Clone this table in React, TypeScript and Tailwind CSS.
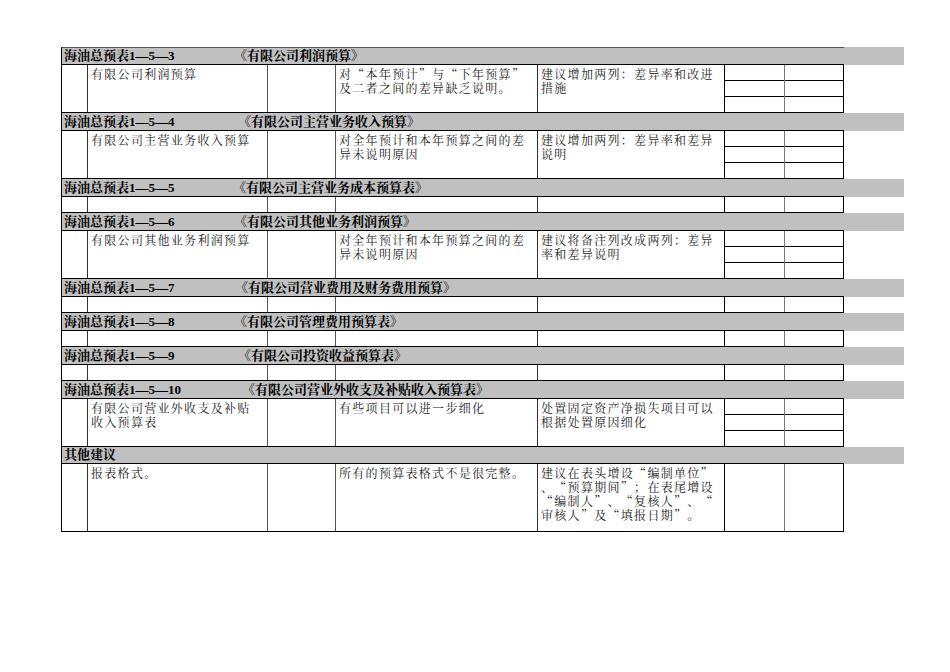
import React from "react";

type Row =
  | { kind: "head"; code: string; title?: string; tx: number; h?: number; first?: boolean }
  | { kind: "data"; c2: string[]; c4: string[]; c5: string[]; tall?: boolean }
  | { kind: "empty" };

const rows: Row[] = [
  { kind: "head", code: "海油总预表1—5—3", title: "《有限公司利润预算》", tx: 172, first: true },
  {
    kind: "data",
    c2: ["有限公司利润预算"],
    c4: ["对“本年预计”与“下年预算”", "及二者之间的差异缺乏说明。"],
    c5: ["建议增加两列：差异率和改进", "措施"],
  },
  { kind: "head", code: "海油总预表1—5—4", title: "《有限公司主营业务收入预算》", tx: 176 },
  {
    kind: "data",
    c2: ["有限公司主营业务收入预算"],
    c4: ["对全年预计和本年预算之间的差", "异未说明原因"],
    c5: ["建议增加两列：差异率和差异", "说明"],
  },
  { kind: "head", code: "海油总预表1—5—5", title: "《有限公司主营业务成本预算表》", tx: 171 },
  { kind: "empty" },
  { kind: "head", code: "海油总预表1—5—6", title: "《有限公司其他业务利润预算》", tx: 172 },
  {
    kind: "data",
    c2: ["有限公司其他业务利润预算"],
    c4: ["对全年预计和本年预算之间的差", "异未说明原因"],
    c5: ["建议将备注列改成两列：差异", "率和差异说明"],
  },
  { kind: "head", code: "海油总预表1—5—7", title: "《有限公司营业费用及财务费用预算》", tx: 173 },
  { kind: "empty" },
  { kind: "head", code: "海油总预表1—5—8", title: "《有限公司管理费用预算表》", tx: 172 },
  { kind: "empty" },
  { kind: "head", code: "海油总预表1—5—9", title: "《有限公司投资收益预算表》", tx: 176 },
  { kind: "empty" },
  { kind: "head", code: "海油总预表1—5—10", title: "《有限公司营业外收支及补贴收入预算表》", tx: 180 },
  {
    kind: "data",
    c2: ["有限公司营业外收支及补贴", "收入预算表"],
    c4: ["有些项目可以进一步细化"],
    c5: ["处置固定资产净损失项目可以", "根据处置原因细化"],
  },
  { kind: "head", code: "其他建议", tx: 0, h: 17 },
  {
    kind: "data",
    tall: true,
    c2: ["报表格式。"],
    c4: ["所有的预算表格式不是很完整。"],
    c5: ["建议在表头增设“编制单位”", "、“预算期间”；在表尾增设", "“编制人”、“复核人”、“", "审核人”及“填报日期”。"],
  },
];

const cjk = { fontFamily: '"Noto Serif CJK SC", "Noto Sans CJK SC", "Liberation Serif", serif' };
const head = { fontFamily: '"Liberation Serif", "Noto Serif CJK SC", "Noto Sans CJK SC", serif' };

function Lines({ lines }: { lines: string[] }) {
  return (
    <div
      className="pl-[3px] pt-[2px] text-[12px] leading-[14px] tracking-[1.3px] text-[#222] whitespace-nowrap"
      style={cjk}
    >
      {lines.map((l, i) => (
        <React.Fragment key={i}>
          {i > 0 && <br />}
          {l}
        </React.Fragment>
      ))}
    </div>
  );
}

function SplitCol({ tall, last }: { tall?: boolean; last?: boolean }) {
  return (
    <div
      className={`w-[60px] flex flex-col border-l ${last ? "border-r border-r-black border-l-[#777]" : "border-l-black"}`}
    >
      {!tall && (
        <>
          <div className="h-[16px] border-b border-black" />
          <div className="h-[16px] border-b border-black" />
        </>
      )}
    </div>
  );
}

function HeadRow({ row }: { row: Extract<Row, { kind: "head" }> }) {
  return (
    <div className="flex" style={{ height: row.h ?? 18 }}>
      <div
        className={`w-[783px] bg-[#c0c0c0] border-l border-black border-b flex items-center pl-[2px] text-[13px] leading-[16px] font-bold text-black ${
          row.first ? "border-t border-t-[#555]" : ""
        }`}
        style={head}
      >
        <span className="whitespace-nowrap" style={row.tx ? { width: row.tx - 2 } : undefined}>
          {row.code}
        </span>
        {row.title && <span className="whitespace-nowrap">{row.title}</span>}
      </div>
      <div className="w-[60px] bg-[#c0c0c0]" />
    </div>
  );
}

function DataRow({ row }: { row: Extract<Row, { kind: "data" }> }) {
  return (
    <div className={`flex w-[783px] border-b border-black ${row.tall ? "h-[68px]" : "h-[48px]"}`}>
      <div className="w-[26px] border-l border-black" />
      <div className="w-[180px] border-l border-[#333]">
        <Lines lines={row.c2} />
      </div>
      <div className="w-[68px] border-l border-[#555]" />
      <div className="w-[202px] border-l border-[#555]">
        <Lines lines={row.c4} />
      </div>
      <div className="w-[187px] border-l border-[#333]">
        <Lines lines={row.c5} />
      </div>
      <SplitCol tall={row.tall} />
      <SplitCol tall={row.tall} last />
    </div>
  );
}

function EmptyRow() {
  return (
    <div className="flex w-[783px] h-[16px] border-b border-black">
      <div className="w-[26px] border-l border-black" />
      <div className="w-[180px] border-l border-[#333]" />
      <div className="w-[68px] border-l border-[#555]" />
      <div className="w-[202px] border-l border-[#555]" />
      <div className="w-[187px] border-l border-[#333]" />
      <div className="w-[60px] border-l border-black" />
      <div className="w-[60px] border-l border-l-[#777] border-r border-r-black" />
    </div>
  );
}

export default function App() {
  return (
    <div className="w-[950px] h-[672px] bg-white pl-[61px] pt-[47px]">
      <div className="flex flex-col w-[843px]">
        {rows.map((r, i) =>
          r.kind === "head" ? (
            <HeadRow key={i} row={r} />
          ) : r.kind === "data" ? (
            <DataRow key={i} row={r} />
          ) : (
            <EmptyRow key={i} />
          )
        )}
      </div>
    </div>
  );
}
